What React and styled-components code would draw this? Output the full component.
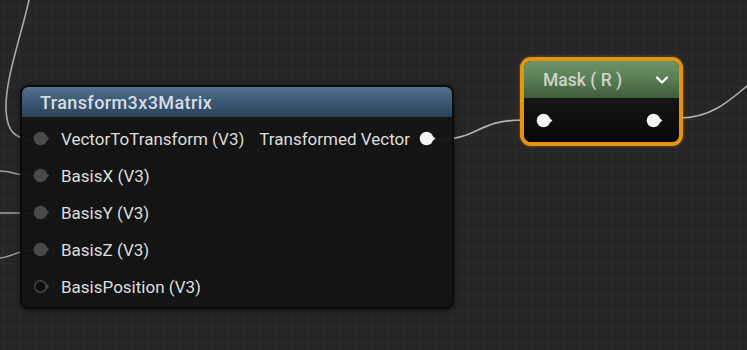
import React from 'react'
import styled, { createGlobalStyle } from 'styled-components'

const GlobalStyle = createGlobalStyle`
    html, body {
        margin: 0;
        padding: 0;
        background: #252525;
    }
    body {
        font-family: Roboto, "Noto Sans", "Liberation Sans", sans-serif;
    }
`

const Canvas = styled.div`
    position: relative;
    width: 747px;
    height: 350px;
    overflow: hidden;
    background-color: #262626;
    background-image:
        linear-gradient(rgba(255, 255, 255, 0.025) 1px, transparent 1px),
        linear-gradient(90deg, rgba(255, 255, 255, 0.025) 1px, transparent 1px);
    background-size: 16px 16px;
    background-position: 3px 7px;
`

const Wires = styled.svg`
    position: absolute;
    left: 0;
    top: 0;
    pointer-events: none;
`

const Node = styled.div`
    position: absolute;
    left: ${props => props.x}px;
    top: ${props => props.y}px;
    width: ${props => props.w}px;
    display: flex;
    flex-direction: column;
    border-radius: 8px;
    background: rgba(20, 20, 20, 0.96);
    border: 2px solid #0b0b0b;
    box-shadow: 0 2px 6px rgba(0, 0, 0, 0.5);
    overflow: hidden;
`

const Header = styled.div`
    height: 30px;
    padding: 0 18px;
    display: flex;
    align-items: center;
    border-radius: 6px 6px 0 0;
    background: linear-gradient(180deg, #54738f 0%, #3d5a75 45%, #2b435a 100%);
    color: #d5dde6;
    font-size: 18px;
    font-weight: 500;
    letter-spacing: 0.4px;
`

const Body = styled.div`
    display: flex;
    flex-direction: column;
    padding: 3px 0 2px;
`

const Row = styled.div`
    height: 37px;
    display: flex;
    align-items: center;
    justify-content: space-between;
    padding: 0 14px 0 11px;
`

const Side = styled.div`
    display: flex;
    align-items: center;
    gap: 9px;
`

const Label = styled.span`
    color: #dedede;
    font-size: 17px;
    white-space: nowrap;
`

const MaskFrame = styled.div`
    position: absolute;
    left: 520px;
    top: 57px;
    width: 163px;
    height: 89px;
    box-sizing: border-box;
    border: 4px solid #e69410;
    border-radius: 11px;
    background: #0c0c0c;
    box-shadow: 0 0 3px rgba(255, 170, 40, 0.45);
    display: flex;
    flex-direction: column;
    overflow: hidden;
`

const MaskHeader = styled.div`
    height: 37px;
    display: flex;
    align-items: center;
    justify-content: space-between;
    padding: 0 10px 0 19px;
    background: linear-gradient(180deg, #70946a 0%, #587c53 50%, #3f5c3b 100%);
    color: #ccd6c8;
    font-size: 17.5px;
    font-weight: 500;
`

const MaskBody = styled.div`
    flex: 1;
    display: flex;
    align-items: center;
    justify-content: space-between;
    padding: 0 14px 0 12px;
    background: linear-gradient(180deg, #151515 0%, #070707 100%);
`

const Pin = ({ fill = '#4a4a4a', stroke = 'none' }) => (
    <svg width="19" height="15" viewBox="0 0 19 15">
        <polygon points="12,4 16.5,7.5 12,11" fill={stroke === 'none' ? fill : stroke} />
        <circle cx="7.5" cy="7.5" r={stroke === 'none' ? 6.8 : 5.8} fill={fill} stroke={stroke} strokeWidth="1.4" />
    </svg>
)

const Chevron = () => (
    <svg width="14" height="10" viewBox="0 0 14 10">
        <polyline points="2,2.5 7,7.5 12,2.5" fill="none" stroke="#ffffff" strokeWidth="2.2" strokeLinecap="round" strokeLinejoin="round" />
    </svg>
)

const inputs = [
    { name: 'VectorToTransform (V3)', out: 'Transformed Vector' },
    { name: 'BasisX (V3)' },
    { name: 'BasisY (V3)' },
    { name: 'BasisZ (V3)' },
    { name: 'BasisPosition (V3)', hollow: true },
]

const App = () => {
    return (
        <Canvas>
            <GlobalStyle />
            <Wires width="747" height="350" viewBox="0 0 747 350">
                <g fill="none" strokeLinecap="round">
                    <path d="M 29 0 C 20 40, 5 80, 6 110 C 7 132, 15 139, 34 140" stroke="#a9a9a9" strokeWidth="1.6" />
                    <path d="M 0 171 C 12 171, 18 176, 34 176" stroke="#a0a0a0" strokeWidth="1.5" />
                    <path d="M 0 213 L 34 213" stroke="#a0a0a0" strokeWidth="1.5" />
                    <path d="M 0 258 C 12 257, 18 250, 34 250" stroke="#a0a0a0" strokeWidth="1.5" />
                    <path d="M 432 140 C 482 140, 474 120, 524 120" stroke="#b4b4b4" strokeWidth="1.6" />
                    <path d="M 680 118 C 710 118, 728 102, 747 86" stroke="#b4b4b4" strokeWidth="1.6" />
                </g>
            </Wires>

            <Node x={20} y={85} w={430}>
                <Header>Transform3x3Matrix</Header>
                <Body>
                    {inputs.map(row => (
                        <Row key={row.name}>
                            <Side>
                                {row.hollow ? <Pin fill="#0e0e0e" stroke="#4a4a4a" /> : <Pin />}
                                <Label>{row.name}</Label>
                            </Side>
                            {row.out && (
                                <Side>
                                    <Label>{row.out}</Label>
                                    <Pin fill="#f4f4f4" />
                                </Side>
                            )}
                        </Row>
                    ))}
                </Body>
            </Node>

            <MaskFrame>
                <MaskHeader>
                    <span>Mask ( R )</span>
                    <Chevron />
                </MaskHeader>
                <MaskBody>
                    <Pin fill="#f4f4f4" />
                    <Pin fill="#f4f4f4" />
                </MaskBody>
            </MaskFrame>
        </Canvas>
    )
}

export default App
